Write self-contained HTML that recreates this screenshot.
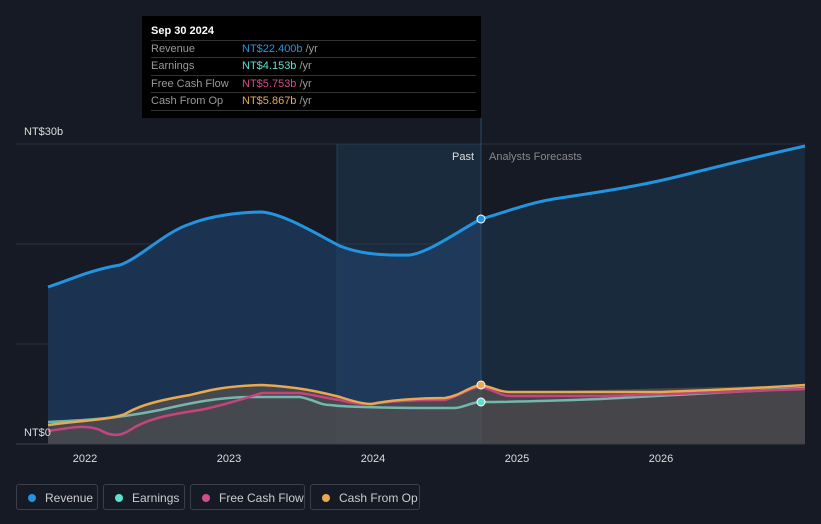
<!DOCTYPE html>
<html><head><style>
body{margin:0;width:821px;height:524px;background:#151a24;font-family:"Liberation Sans",sans-serif;overflow:hidden;position:relative}
.tt{position:absolute;left:142px;top:16px;width:339px;height:102px;background:#000;color:#fff;font-size:11px}
.tt .h{position:absolute;left:9px;top:9px;font-weight:bold}
.row{position:absolute;left:9px;width:325px;border-top:1px solid #333;height:17px;line-height:17px;color:#999}
.row span{position:absolute;left:91px}
.lg{position:absolute;top:484px;height:26px;border:1px solid #3a3f4a;border-radius:3px;color:#ccc;font-size:12px;line-height:26px;box-sizing:border-box;padding-left:28px}
.lg i{position:absolute;left:11px;top:9px;width:8px;height:8px;border-radius:50%}
</style></head><body>
<svg width="821" height="524" style="position:absolute;left:0;top:0">
<defs>
<clipPath id="past"><rect x="0" y="0" width="481" height="524"/></clipPath>
<clipPath id="fut"><rect x="481" y="0" width="400" height="524"/></clipPath>
</defs>
<rect x="337" y="144" width="144" height="300" fill="#17222f"/>
<g stroke="#2a303c"><line x1="16" y1="144" x2="805" y2="144"/><line x1="16" y1="244" x2="805" y2="244"/><line x1="16" y1="344" x2="805" y2="344"/></g>
<path id="rev" d="M48,287 C70,280 90,270 120,265 C140,258 165,232 190,224 C210,216 240,212 262,212 C285,214 320,236 340,246 C355,252 375,256 410,255 C430,252 460,230 481,219 C500,214 530,202 560,198 C600,192 640,186 680,176 C720,166 760,156 805,146 L805,444 L48,444 Z" fill="#1b3350" clip-path="url(#past)"/>
<path d="M48,287 C70,280 90,270 120,265 C140,258 165,232 190,224 C210,216 240,212 262,212 C285,214 320,236 340,246 C355,252 375,256 410,255 C430,252 460,230 481,219 C500,214 530,202 560,198 C600,192 640,186 680,176 C720,166 760,156 805,146 L805,444 L48,444 Z" fill="#1a2a3d" clip-path="url(#fut)"/>
<rect x="337" y="144" width="144" height="300" fill="#2a5a85" opacity="0.18"/>
<line x1="337" y1="144" x2="337" y2="444" stroke="#23405a"/>
<line x1="481" y1="118" x2="481" y2="444" stroke="#2c4a66"/>
<path d="M48,425 C85,420 120,417 155,403 C190,395 225,385 262,385 C300,387 320,392 340,397 C355,402 365,404 372,404 C390,400 420,398 445,398 C460,396 470,386 481,385 C495,388 500,392 510,392 L805,385 L805,444 L48,444 Z" fill="#55504f" opacity="0.75"/>
<path d="M48,422 C90,420 120,418 160,410 C190,403 220,397 250,397 L300,397 C315,400 320,405 330,405 C350,408 420,408 455,408 C465,407 472,402 481,402 C500,402 520,402 600,399 C650,396 700,394 805,388" fill="none" stroke="#7fd3c4" stroke-width="2.5" opacity="0.8"/>
<path d="M48,431 C70,428 85,424 100,430 C110,436 120,437 130,430 C145,420 165,415 200,410 C225,405 245,398 262,393 L300,393 C320,396 330,399 340,400 C355,404 365,404 372,404 C390,401 420,400 445,400 C460,396 470,387 481,387 C495,390 500,396 510,396 L600,396 C650,395 700,393 805,389" fill="none" stroke="#c4457e" stroke-width="2.5"/>
<path d="M48,425 C85,420 110,420 125,414 C140,405 160,400 190,395 C210,390 225,386 262,385 C300,387 320,392 340,397 C355,402 365,404 372,404 C390,400 420,398 445,398 C460,396 470,386 481,385 C495,388 500,392 510,392 L660,392 C720,390 760,388 805,385" fill="none" stroke="#e8a950" stroke-width="2.5"/>
<path d="M48,287 C70,280 90,270 120,265 C140,258 165,232 190,224 C210,216 240,212 262,212 C285,214 320,236 340,246 C355,252 375,256 410,255 C430,252 460,230 481,219 C500,214 530,202 560,198 C600,192 640,186 680,176 C720,166 760,156 805,146" fill="none" stroke="#2394df" stroke-width="3"/>
<circle cx="481" cy="219" r="4" fill="#2394df" stroke="#fff" stroke-width="1"/>
<circle cx="481" cy="385" r="4" fill="#e8a950" stroke="#fff" stroke-width="1"/>
<circle cx="481" cy="402" r="4" fill="#5ee0cc" stroke="#fff" stroke-width="1"/>
<line x1="16" y1="444" x2="805" y2="444" stroke="#3a3f4a"/>
<g fill="#ddd" font-size="11" text-anchor="middle"><text x="85" y="462">2022</text><text x="229" y="462">2023</text><text x="373" y="462">2024</text><text x="517" y="462">2025</text><text x="661" y="462">2026</text></g>
<text x="24" y="135" fill="#ddd" font-size="11">NT$30b</text>
<text x="24" y="436" fill="#ddd" font-size="11">NT$0</text>
<text x="474" y="160" fill="#ddd" font-size="11" text-anchor="end">Past</text>
<text x="489" y="160" fill="#888" font-size="11">Analysts Forecasts</text>
</svg>
<div class="tt"><div class="h">Sep 30 2024</div>
<div class="row" style="top:24px">Revenue<span><b style="font-weight:normal;color:#2394df">NT$22.400b</b> /yr</span></div>
<div class="row" style="top:41px">Earnings<span><b style="font-weight:normal;color:#5ee0cc">NT$4.153b</b> /yr</span></div>
<div class="row" style="top:59px">Free Cash Flow<span><b style="font-weight:normal;color:#d14d8b">NT$5.753b</b> /yr</span></div>
<div class="row" style="top:76px">Cash From Op<span><b style="font-weight:normal;color:#e8a950">NT$5.867b</b> /yr</span></div>
<div class="row" style="top:94px;height:0"></div>
</div>
<div class="lg" style="left:16px;width:82px"><i style="background:#2394df"></i>Revenue</div>
<div class="lg" style="left:103px;width:82px"><i style="background:#5ee0cc"></i>Earnings</div>
<div class="lg" style="left:190px;width:115px"><i style="background:#d14d8b"></i>Free Cash Flow</div>
<div class="lg" style="left:310px;width:110px"><i style="background:#e8a950"></i>Cash From Op</div>
</body></html>
